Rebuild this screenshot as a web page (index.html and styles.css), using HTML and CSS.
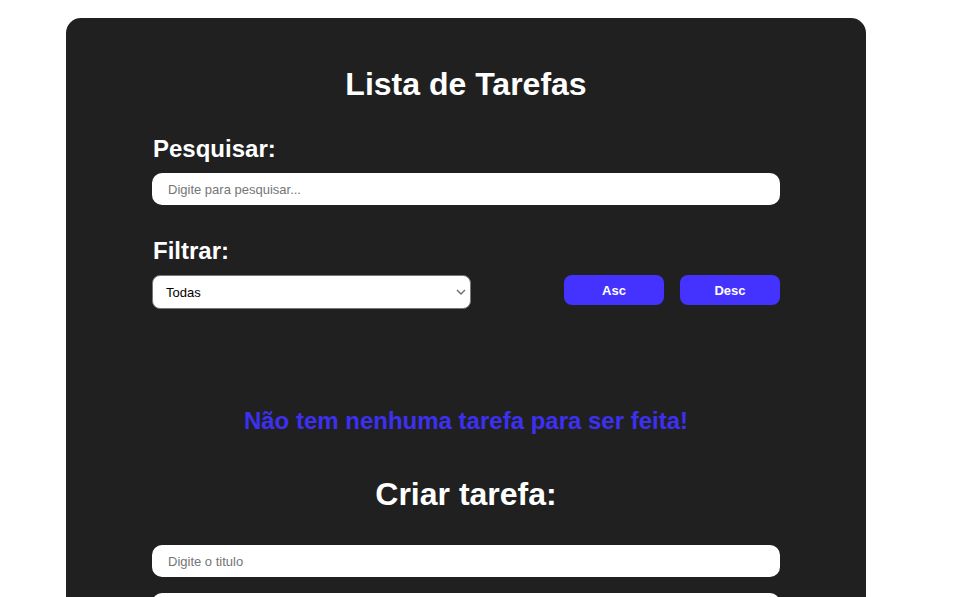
FILE: index.html
```html
<!DOCTYPE html>
<html lang="pt-BR">
<head>
<meta charset="utf-8">
<title>Lista de Tarefas</title>
<link rel="stylesheet" href="styles.css">
</head>
<body>
<main class="card">
  <h1 class="title">Lista de Tarefas</h1>
  <section class="search">
    <h2 class="label">Pesquisar:</h2>
    <input class="field" type="text" placeholder="Digite para pesquisar...">
  </section>
  <section class="filter">
    <h2 class="label">Filtrar:</h2>
    <div class="filter-row">
      <div class="select-wrap">
        <select class="select">
          <option>Todas</option>
        </select>
        <svg class="chevron" width="10" height="6" viewBox="0 0 10 6"><path d="M1 1l4 4 4-4" fill="none" stroke="#6d6d6d" stroke-width="1.4"/></svg>
      </div>
      <div class="sort">
        <button class="btn">Asc</button>
        <button class="btn">Desc</button>
      </div>
    </div>
  </section>
  <p class="empty">Não tem nenhuma tarefa para ser feita!</p>
  <h2 class="subtitle">Criar tarefa:</h2>
  <form class="create">
    <input class="field" type="text" placeholder="Digite o titulo">
    <input class="field" type="text" placeholder="Digite a categoria">
  </form>
</main>
</body>
</html>
```
FILE: styles.css
```css
html, body {
  margin: 0;
  padding: 0;
  background: #ffffff;
  font-family: "Liberation Sans", Arial, sans-serif;
}
.card {
  width: 628px;
  margin: 18px 0 0 66px;
  padding: 40px 86px 40px;
  background: #202020;
  border-radius: 15px;
  color: #ffffff;
  min-height: 700px;
}
.title {
  margin: 8px 0 32px;
  font-size: 32px;
  text-align: center;
}
.label {
  margin: 0 0 10px 1px;
  font-size: 24px;
}
.field {
  display: block;
  box-sizing: border-box;
  width: 100%;
  height: 32px;
  padding: 0 16px;
  border: none;
  border-radius: 10px;
  background: #ffffff;
  font-family: "Liberation Sans", Arial, sans-serif;
  font-size: 13px;
  color: #000;
}
.field::placeholder {
  color: #757575;
}
.filter {
  margin-top: 32px;
}
.filter-row {
  display: flex;
  justify-content: space-between;
  align-items: flex-start;
}
.select-wrap {
  position: relative;
  width: 319px;
  height: 34px;
}
.select {
  appearance: none;
  -webkit-appearance: none;
  box-sizing: border-box;
  width: 100%;
  height: 34px;
  padding: 0 24px 0 13px;
  border: 1px solid #767676;
  border-radius: 8px;
  background: #fff;
  font-family: "Liberation Sans", Arial, sans-serif;
  font-size: 13px;
  color: #000;
}
.chevron {
  position: absolute;
  right: 5px;
  top: 14px;
  pointer-events: none;
}
.sort {
  display: flex;
  gap: 16px;
}
.btn {
  width: 100px;
  height: 30px;
  border: none;
  border-radius: 8px;
  background: #4433ff;
  color: #fff;
  font-family: "Liberation Sans", Arial, sans-serif;
  font-weight: bold;
  font-size: 13px;
}
.empty {
  margin: 98px 0 0;
  text-align: center;
  color: #3d30f0;
  font-weight: bold;
  font-size: 24px;
}
.subtitle {
  margin: 41px 0 32px;
  text-align: center;
  font-size: 32px;
}
.create {
  display: flex;
  flex-direction: column;
  gap: 16px;
}
```
